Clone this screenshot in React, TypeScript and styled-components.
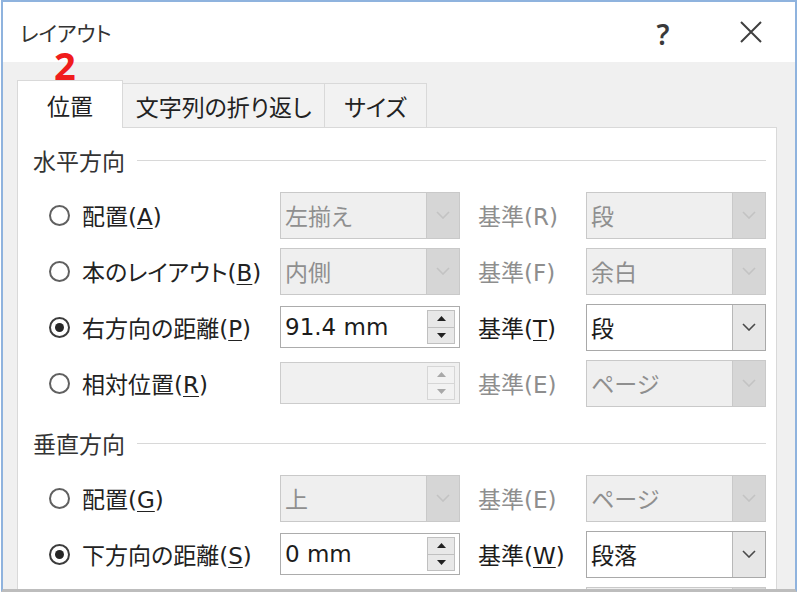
import { FunctionComponent } from "react";
import styled, { createGlobalStyle } from "styled-components";

const GlobalStyle = createGlobalStyle`
  body {
    margin: 0;
    background: #ffffff;
    font-family: "DejaVu Sans", "Noto Sans CJK JP", sans-serif;
    font-feature-settings: "palt";
  }
`;

type Control =
  | { kind: "select"; value: string; disabled?: boolean }
  | { kind: "spin"; value: string; disabled?: boolean };

interface RowData {
  label?: string;
  accessKey?: string;
  checked?: boolean;
  control: Control;
  baseKey?: string;
  baseDisabled?: boolean;
  baseValue: string;
}

const horizontalRows: RowData[] = [
  {
    label: "配置",
    accessKey: "A",
    control: { kind: "select", value: "左揃え", disabled: true },
    baseKey: "R",
    baseDisabled: true,
    baseValue: "段",
  },
  {
    label: "本のレイアウト",
    accessKey: "B",
    control: { kind: "select", value: "内側", disabled: true },
    baseKey: "F",
    baseDisabled: true,
    baseValue: "余白",
  },
  {
    label: "右方向の距離",
    accessKey: "P",
    checked: true,
    control: { kind: "spin", value: "91.4 mm" },
    baseKey: "T",
    baseValue: "段",
  },
  {
    label: "相対位置",
    accessKey: "R",
    control: { kind: "spin", value: "", disabled: true },
    baseKey: "E",
    baseDisabled: true,
    baseValue: "ページ",
  },
];

// the last row is cut by the bottom edge, only the top of its boxes shows
const verticalRows: RowData[] = [
  {
    label: "配置",
    accessKey: "G",
    control: { kind: "select", value: "上", disabled: true },
    baseKey: "E",
    baseDisabled: true,
    baseValue: "ページ",
  },
  {
    label: "下方向の距離",
    accessKey: "S",
    checked: true,
    control: { kind: "spin", value: "0 mm" },
    baseKey: "W",
    baseValue: "段落",
  },
  {
    control: { kind: "spin", value: "", disabled: true },
    baseDisabled: true,
    baseValue: "",
  },
];

const Chevron = ({ color }: { color: string }) => (
  <svg width="14" height="8" viewBox="0 0 14 8">
    <path d="M1 1 L7 7 L13 1" fill="none" stroke={color} strokeWidth="1.6" />
  </svg>
);

const Triangle = ({ up, color }: { up?: boolean; color: string }) => (
  <svg width="9" height="5" viewBox="0 0 9 5">
    <polygon points={up ? "0,5 4.5,0 9,5" : "0,0 4.5,5 9,0"} fill={color} />
  </svg>
);

const Dropdown: FunctionComponent<{ value: string; disabled?: boolean }> = ({
  value,
  disabled,
}) => (
  <SelectBox $disabled={disabled}>
    <FieldText $disabled={disabled}>{value}</FieldText>
    <SelectArrow $disabled={disabled}>
      <Chevron color={disabled ? "#c3c3c3" : "#4a4a4a"} />
    </SelectArrow>
  </SelectBox>
);

const SpinField: FunctionComponent<{ value: string; disabled?: boolean }> = ({
  value,
  disabled,
}) => (
  <SpinBox $disabled={disabled}>
    <FieldText $disabled={disabled}>{value}</FieldText>
    <SpinButtons>
      <SpinButton $disabled={disabled}>
        <Triangle up color={disabled ? "#a8a8a8" : "#222"} />
      </SpinButton>
      <SpinButton $disabled={disabled}>
        <Triangle color={disabled ? "#a8a8a8" : "#222"} />
      </SpinButton>
    </SpinButtons>
  </SpinBox>
);

const OptionRow: FunctionComponent<{ row: RowData }> = ({ row }) => (
  <>
    <RadioCell>
      {row.label && (
        <>
          <Radio $checked={row.checked} />
          <Label>
            {row.label}(<Key>{row.accessKey}</Key>)
          </Label>
        </>
      )}
    </RadioCell>
    <ControlCell>
      {row.control.kind === "select" ? (
        <Dropdown value={row.control.value} disabled={row.control.disabled} />
      ) : (
        <SpinField value={row.control.value} disabled={row.control.disabled} />
      )}
    </ControlCell>
    <BaseLabel $disabled={row.baseDisabled}>
      {row.baseKey && (
        <>
          基準(
          {row.baseDisabled ? row.baseKey : <Key>{row.baseKey}</Key>})
        </>
      )}
    </BaseLabel>
    <ControlCell>
      <Dropdown value={row.baseValue} disabled={row.baseDisabled} />
    </ControlCell>
  </>
);

const Section: FunctionComponent<{ title: string; rows: RowData[] }> = ({
  title,
  rows,
}) => (
  <SectionBlock>
    <SectionHeader>
      <SectionTitle>{title}</SectionTitle>
      <SectionRule />
    </SectionHeader>
    <RowGrid>
      {rows.map((row, i) => (
        <OptionRow key={i} row={row} />
      ))}
    </RowGrid>
  </SectionBlock>
);

const App = () => (
  <>
    <GlobalStyle />
    <Window>
      <TitleBar>
        <Title>レイアウト</Title>
        <HelpButton>?</HelpButton>
        <CloseButton>
          <svg width="22" height="22" viewBox="0 0 22 22">
            <path d="M1 1 L21 21 M21 1 L1 21" stroke="#3f3f3f" strokeWidth="2" />
          </svg>
        </CloseButton>
      </TitleBar>
      <Body>
        <TabStrip>
          <Tab $active $width={106}>
            位置
          </Tab>
          <Tab $width={202}>文字列の折り返し</Tab>
          <Tab $width={102}>サイズ</Tab>
        </TabStrip>
        <Panel>
          <Section title="水平方向" rows={horizontalRows} />
          <Section title="垂直方向" rows={verticalRows} />
        </Panel>
      </Body>
      <StepMark>2</StepMark>
    </Window>
  </>
);

const Window = styled.div`
  position: relative;
  box-sizing: border-box;
  width: 796px;
  height: 592px;
  margin-left: 1px;
  border: 2px solid #8fb3de;
  border-bottom: 3px solid #bdbdbd;
  overflow: hidden;
  display: flex;
  flex-direction: column;
  color: #222;
`;

const TitleBar = styled.div`
  height: 60px;
  flex: none;
  display: flex;
  align-items: center;
  padding: 0 19px 0 17px;
  background: #ffffff;
`;

const Title = styled.div`
  flex: 1;
  font-family: "Noto Sans CJK JP", sans-serif;
  font-size: 21px;
  line-height: 21px;
  color: #333;
`;

const HelpButton = styled.div`
  width: 40px;
  text-align: center;
  font-family: "Noto Sans", sans-serif;
  font-size: 28px;
  line-height: 30px;
  font-weight: 600;
  color: #3a3a3a;
  margin-right: 43px;
  margin-top: 3px;
`;

const CloseButton = styled.div`
  width: 50px;
  display: flex;
  justify-content: center;
`;

const Body = styled.div`
  flex: 1;
  display: flex;
  flex-direction: column;
  background: #f0f0f0;
  padding: 18px 18px 0 14px;
`;

const TabStrip = styled.div`
  display: flex;
  align-items: flex-end;
`;

const Tab = styled.div<{ $active?: boolean; $width: number }>`
  box-sizing: border-box;
  width: ${(p) => p.$width}px;
  height: ${(p) => (p.$active ? 48 : 44)}px;
  margin-bottom: ${(p) => (p.$active ? -1 : 0)}px;
  position: relative;
  z-index: ${(p) => (p.$active ? 1 : 0)};
  display: flex;
  align-items: center;
  justify-content: center;
  background: ${(p) => (p.$active ? "#ffffff" : "#f2f2f2")};
  border: 1px solid #d9d9d9;
  border-bottom: none;
  border-left: ${(p) => (p.$active ? "1px solid #d9d9d9" : "none")};
  font-size: 23px;
  color: #222;
`;

const Panel = styled.div`
  flex: 1;
  background: #ffffff;
  border: 1px solid #d9d9d9;
  padding: 17px 10px 0 15px;
`;

const SectionBlock = styled.div`
  & + & {
    margin-top: 17px;
  }
`;

const SectionHeader = styled.div`
  height: 30px;
  display: flex;
  align-items: center;
  margin-bottom: 12px;
`;

const SectionTitle = styled.div`
  font-size: 23px;
  color: #333;
`;

const SectionRule = styled.div`
  flex: 1;
  height: 1px;
  margin-left: 12px;
  background: #d8d8d8;
`;

const RowGrid = styled.div`
  display: grid;
  grid-template-columns: 230px 180px 126px 180px;
  grid-auto-rows: 56px;
  margin-left: 17px;
  align-items: center;
`;

const RadioCell = styled.div`
  display: flex;
  align-items: center;
  gap: 12px;
`;

const Radio = styled.span<{ $checked?: boolean }>`
  box-sizing: border-box;
  width: 21px;
  height: 21px;
  margin-left: -1px;
  border-radius: 50%;
  border: 2px solid ${(p) => (p.$checked ? "#3c3c3c" : "#606060")};
  background: #ffffff;
  display: flex;
  align-items: center;
  justify-content: center;

  &::after {
    content: "";
    display: ${(p) => (p.$checked ? "block" : "none")};
    width: 9px;
    height: 9px;
    border-radius: 50%;
    background: #262626;
  }
`;

const Label = styled.span`
  font-size: 23px;
  color: #222;
  white-space: nowrap;
`;

const Key = styled.span`
  text-decoration: underline;
  text-decoration-thickness: 1px;
  text-underline-offset: 3px;
`;

const BaseLabel = styled.div<{ $disabled?: boolean }>`
  padding-left: 18px;
  font-size: 23px;
  white-space: nowrap;
  color: ${(p) => (p.$disabled ? "#8e8e8e" : "#1c1c1c")};
`;

const ControlCell = styled.div`
  display: flex;
  align-items: center;
`;

const SelectBox = styled.div<{ $disabled?: boolean }>`
  box-sizing: border-box;
  width: 180px;
  height: 47px;
  display: flex;
  border: 1px solid ${(p) => (p.$disabled ? "#c9c9c9" : "#a9a9a9")};
  background: ${(p) => (p.$disabled ? "#efefef" : "#ffffff")};
`;

const FieldText = styled.div<{ $disabled?: boolean }>`
  flex: 1;
  display: flex;
  align-items: center;
  padding-left: 4px;
  font-size: 23px;
  white-space: nowrap;
  color: ${(p) => (p.$disabled ? "#8f8f8f" : "#1c1c1c")};
`;

const SelectArrow = styled.div<{ $disabled?: boolean }>`
  width: 32px;
  display: flex;
  align-items: center;
  justify-content: center;
  border-left: 1px solid ${(p) => (p.$disabled ? "#c9c9c9" : "#b8b8b8")};
  background: ${(p) => (p.$disabled ? "#d6d6d6" : "#e6e6e6")};
`;

const SpinBox = styled.div<{ $disabled?: boolean }>`
  box-sizing: border-box;
  width: 180px;
  height: 42px;
  display: flex;
  border: 1px solid ${(p) => (p.$disabled ? "#cccccc" : "#acacac")};
  background: ${(p) => (p.$disabled ? "#f0f0f0" : "#ffffff")};
`;

const SpinButtons = styled.div`
  width: 28px;
  margin: 3px 4px 3px 0;
  display: flex;
  flex-direction: column;
`;

const SpinButton = styled.div<{ $disabled?: boolean }>`
  flex: 1;
  display: flex;
  align-items: center;
  justify-content: center;
  border: 1px solid ${(p) => (p.$disabled ? "#d6d6d6" : "#c0c0c0")};
  background: ${(p) => (p.$disabled ? "#f2f2f2" : "#e8e8e8")};

  & + & {
    border-top: none;
  }
`;

const StepMark = styled.div`
  position: absolute;
  left: 51px;
  top: 44px;
  font-family: "Noto Sans", sans-serif;
  font-size: 38px;
  line-height: 38px;
  font-weight: 700;
  color: #f01c1c;
`;

export default App;
